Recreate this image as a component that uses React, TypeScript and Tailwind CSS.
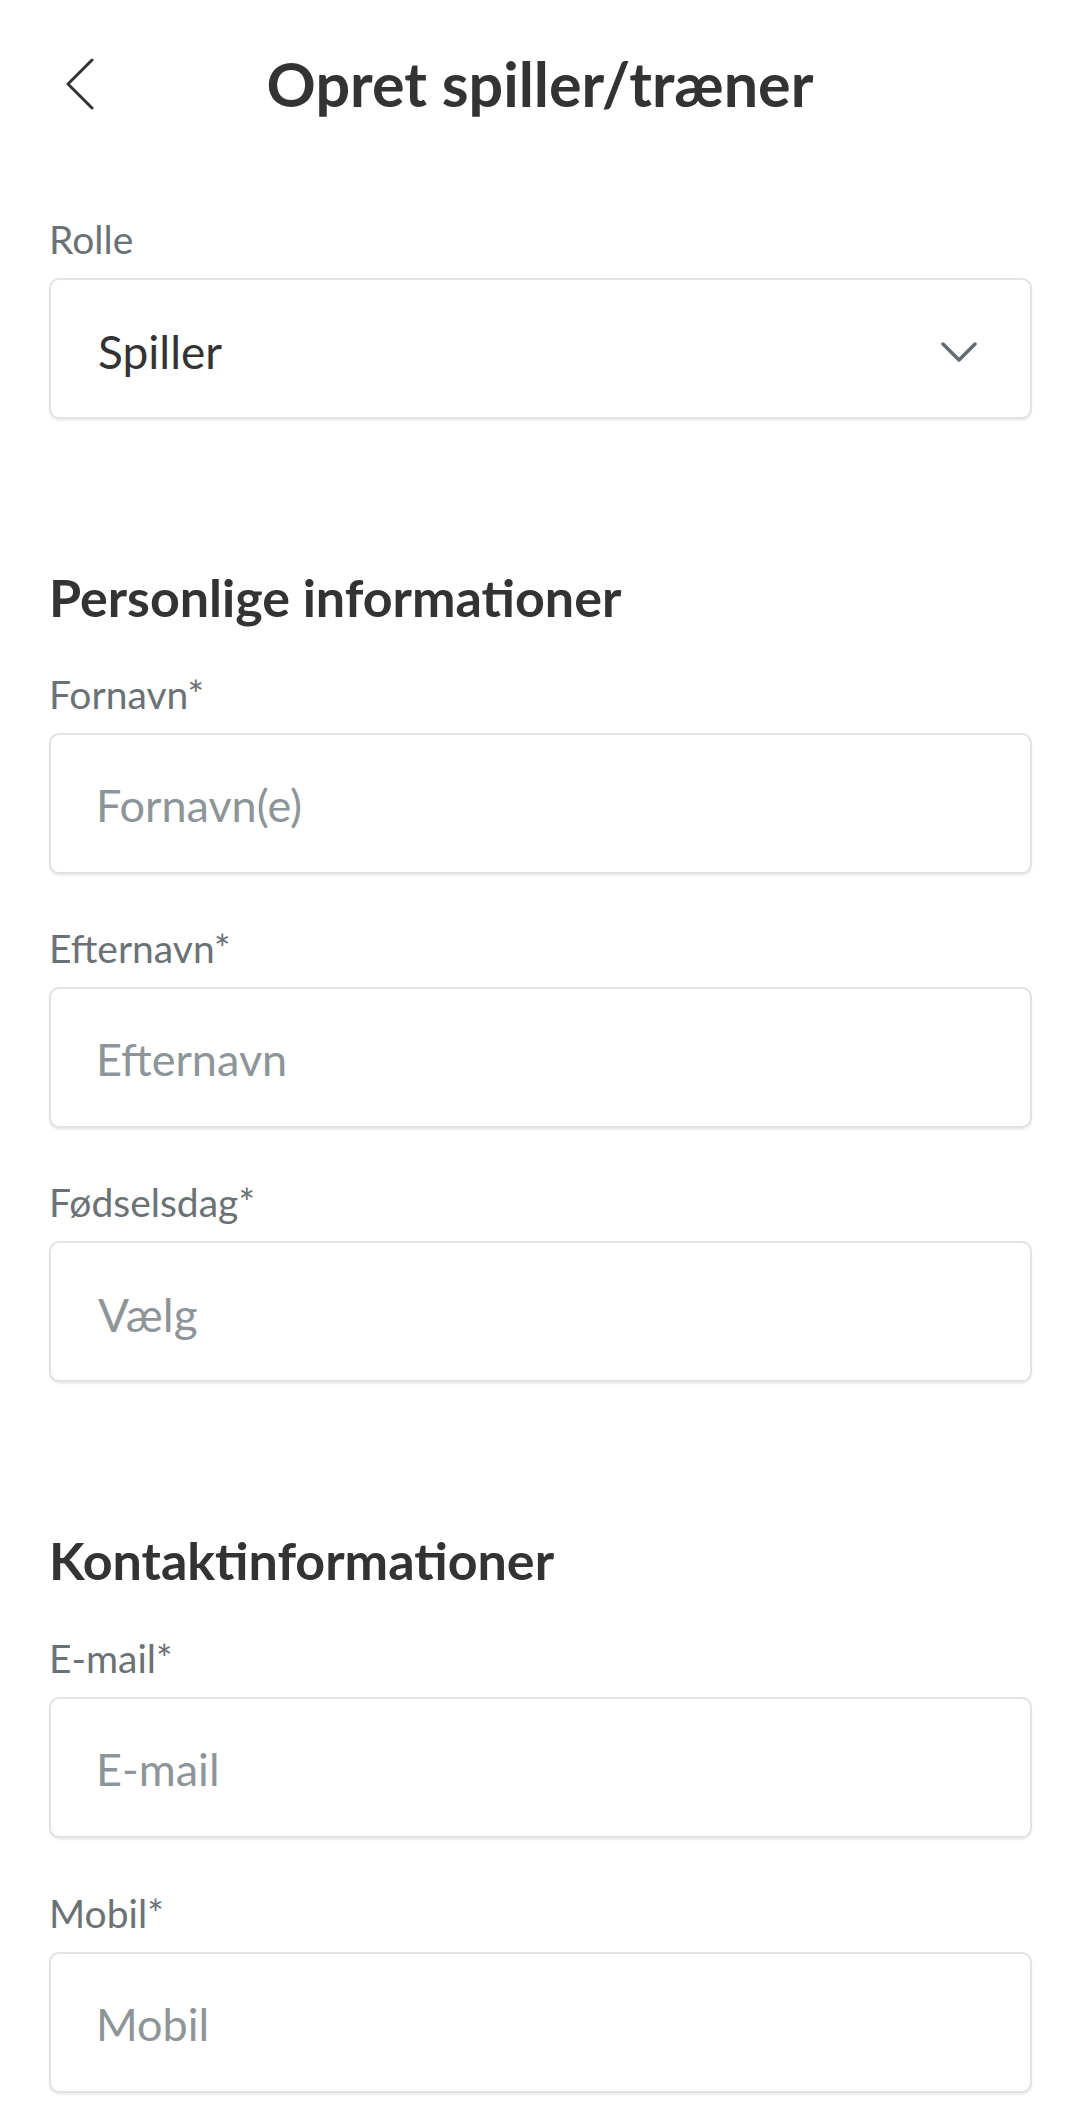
import React from "react";

const font = { fontFamily: "Lato, 'Open Sans', sans-serif" };

const BackIcon = () => (
  <svg width="30" height="52" viewBox="0 0 30 52" fill="none">
    <polyline
      points="27,2 3,26 27,50"
      stroke="#333333"
      strokeWidth="3"
      strokeLinecap="round"
      strokeLinejoin="round"
    />
  </svg>
);

const ChevronDown = () => (
  <svg width="36" height="20" viewBox="0 0 36 20" fill="none">
    <polyline
      points="2,2 18,18 34,2"
      stroke="#666a6d"
      strokeWidth="3.5"
      strokeLinecap="round"
      strokeLinejoin="round"
    />
  </svg>
);

interface FieldProps {
  label: string;
  required?: boolean;
  children: React.ReactNode;
}

// Label + box
const Field = ({ label, required = true, children }: FieldProps) => (
  <div className="flex flex-col">
    <label className="text-[39px] leading-[46px] text-[#6b7276] mb-[16px]">
      {label}
      {required && "*"}
    </label>
    {children}
  </div>
);

const boxClass =
  "h-[141px] w-full rounded-[10px] border-2 border-[#e2e2e2] bg-white shadow-[0_2px_2px_rgba(0,0,0,0.07)]";

const TextInput = ({ placeholder }: { placeholder: string }) => (
  <input
    type="text"
    placeholder={placeholder}
    className={`${boxClass} pl-[45px] pr-[40px] pt-[2px] text-[45px] text-[#333333] placeholder:text-[#8e9598] outline-none`}
    style={font}
  />
);

const SelectBox = ({
  value,
  placeholder,
  chevron = false,
}: {
  value?: string;
  placeholder?: string;
  chevron?: boolean;
}) => (
  <div
    className={`${boxClass} flex items-center justify-between pl-[47px] pr-[53px] pt-[6px]`}
  >
    {value ? (
      <span className="text-[46px] text-[#333333]">{value}</span>
    ) : (
      <span className="text-[46px] text-[#8e9598]">{placeholder}</span>
    )}
    {chevron && <ChevronDown />}
  </div>
);

const App = () => {
  return (
    <div className="min-h-screen w-full bg-white overflow-hidden" style={font}>
      {/* Header */}
      <div className="grid h-[167px] grid-cols-[1fr_auto_1fr] items-center">
        <div className="pl-[65px] flex items-center">
          <BackIcon />
        </div>
        <h1 className="text-[61px] leading-[56px] font-bold text-[#333333]">
          Opret spiller/træner
        </h1>
        <div />
      </div>

      <div className="pl-[49px] pr-[48px] flex flex-col">
        <div className="mt-[49px]">
          <Field label="Rolle" required={false}>
            <SelectBox value="Spiller" chevron />
          </Field>
        </div>

        <h2 className="mt-[150px] text-[52px] leading-[56px] font-bold text-[#333333]">
          Personlige informationer
        </h2>
        <div className="mt-[46px] flex flex-col gap-[51px]">
          <Field label="Fornavn">
            <TextInput placeholder="Fornavn(e)" />
          </Field>
          <Field label="Efternavn">
            <TextInput placeholder="Efternavn" />
          </Field>
          <Field label="Fødselsdag">
            <SelectBox placeholder="Vælg" />
          </Field>
        </div>

        <h2 className="mt-[150px] text-[52px] leading-[56px] font-bold text-[#333333]">
          Kontaktinformationer
        </h2>
        <div className="mt-[47px] flex flex-col gap-[52px]">
          <Field label="E-mail">
            <TextInput placeholder="E-mail" />
          </Field>
          <Field label="Mobil">
            <TextInput placeholder="Mobil" />
          </Field>
        </div>
      </div>
    </div>
  );
};

export default App;
